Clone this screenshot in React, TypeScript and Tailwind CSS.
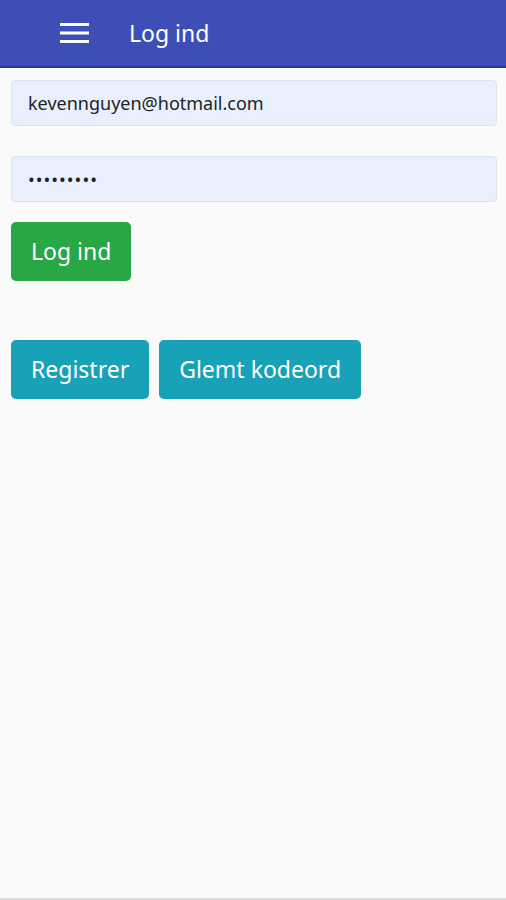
const App = () => {
  return (
    <div
      className="flex flex-col w-[506px] h-[900px] bg-[#fafafa]"
      style={{ fontFamily: '"Noto Sans", "Open Sans", sans-serif' }}
    >
      <header className="flex items-center h-[68px] shrink-0 bg-[#3d4fb6] border-b-2 border-[#2433a0] pl-[60px]">
        <svg width="29" height="20" viewBox="0 0 29 20" className="shrink-0">
          <rect x="0" y="0" width="29" height="3" fill="#fff" />
          <rect x="0" y="8.5" width="29" height="3" fill="#fff" />
          <rect x="0" y="17" width="29" height="3" fill="#fff" />
        </svg>
        <h1 className="ml-[40px] text-[23px] text-white">Log ind</h1>
      </header>

      <main className="flex flex-col flex-1 px-[11px] pt-[12px]">
        <input
          type="email"
          defaultValue="kevennguyen@hotmail.com"
          className="h-[46px] w-[486px] px-[16px] bg-[#e8f0fe] border border-[#dde3ec] rounded-[4px] text-[18px] text-[#222] outline-none"
        />
        <input
          type="password"
          defaultValue="123456789"
          className="mt-[30px] h-[46px] w-[486px] px-[16px] bg-[#e8f0fe] border border-[#dde3ec] rounded-[4px] text-[18px] text-[#222] outline-none tracking-[1px]"
        />
        <div className="mt-[20px]">
          <button
            type="button"
            className="h-[59px] px-[20px] bg-[#28a745] rounded-[5px] text-[23px] text-white"
          >
            Log ind
          </button>
        </div>
        <div className="flex gap-[10px] mt-[59px]">
          <button
            type="button"
            className="h-[59px] px-[20px] bg-[#17a2b8] rounded-[5px] text-[23px] text-white"
          >
            Registrer
          </button>
          <button
            type="button"
            className="h-[59px] px-[20px] bg-[#17a2b8] rounded-[5px] text-[23px] text-white"
          >
            Glemt kodeord
          </button>
        </div>
      </main>
      <div className="h-[2px] bg-[#dcdcdc]" />
    </div>
  );
};

export default App;
